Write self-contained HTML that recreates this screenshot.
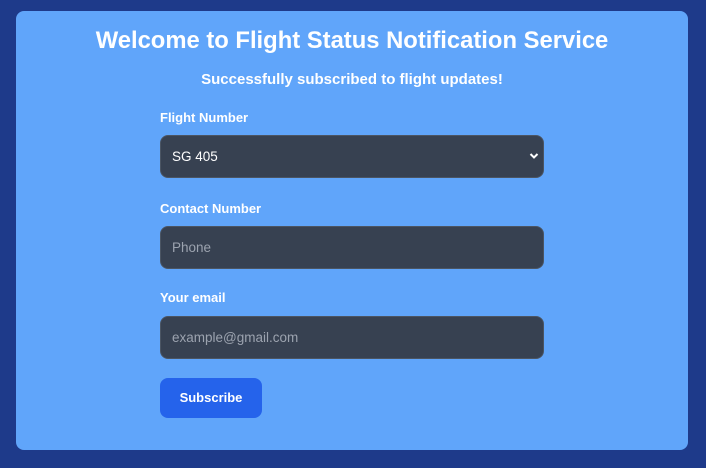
<!DOCTYPE html>
<html><head><style>
body{margin:0;width:706px;height:468px;background:#1e3a8a;font-family:"Liberation Sans",sans-serif;overflow:hidden}
.card{position:absolute;left:16px;top:11px;width:672px;height:439px;background:#60a5fa;border-radius:8px}
h1{position:absolute;left:0;right:0;top:16px;margin:0;text-align:center;color:#fff;font-size:23.8px;font-weight:bold}
.msg{position:absolute;left:0;right:0;top:60px;text-align:center;color:#fff;font-size:15px;font-weight:bold}
.lbl{position:absolute;left:144px;color:#fff;font-size:13px;font-weight:bold}
.inp{position:absolute;left:144px;width:371px;height:41px;background:#374151;border:1px solid #4b5563;border-radius:8px;color:#9ca3af;font-size:13.5px;line-height:41px;padding-left:11px;box-sizing:content-box}
.btn{position:absolute;left:144px;top:367px;width:102px;height:40px;background:#2563eb;border-radius:8px;color:#fff;font-size:13px;font-weight:bold;text-align:center;line-height:40px}
</style></head><body>
<div class="card">
<h1>Welcome to Flight Status Notification Service</h1>
<div class="msg">Successfully subscribed to flight updates!</div>
<div class="lbl" style="top:99px">Flight Number</div>
<div class="inp" style="top:124px;color:#fff">SG 405
<svg style="position:absolute;right:4px;top:16px" width="10" height="8" viewBox="0 0 10 8"><path d="M1.5 2 L5 5.5 L8.5 2" stroke="#fff" stroke-width="2" fill="none"/></svg></div>
<div class="lbl" style="top:190px">Contact Number</div>
<div class="inp" style="top:215px">Phone</div>
<div class="lbl" style="top:279px">Your email</div>
<div class="inp" style="top:305px">example@gmail.com</div>
<div class="btn">Subscribe</div>
</div>
</body></html>
